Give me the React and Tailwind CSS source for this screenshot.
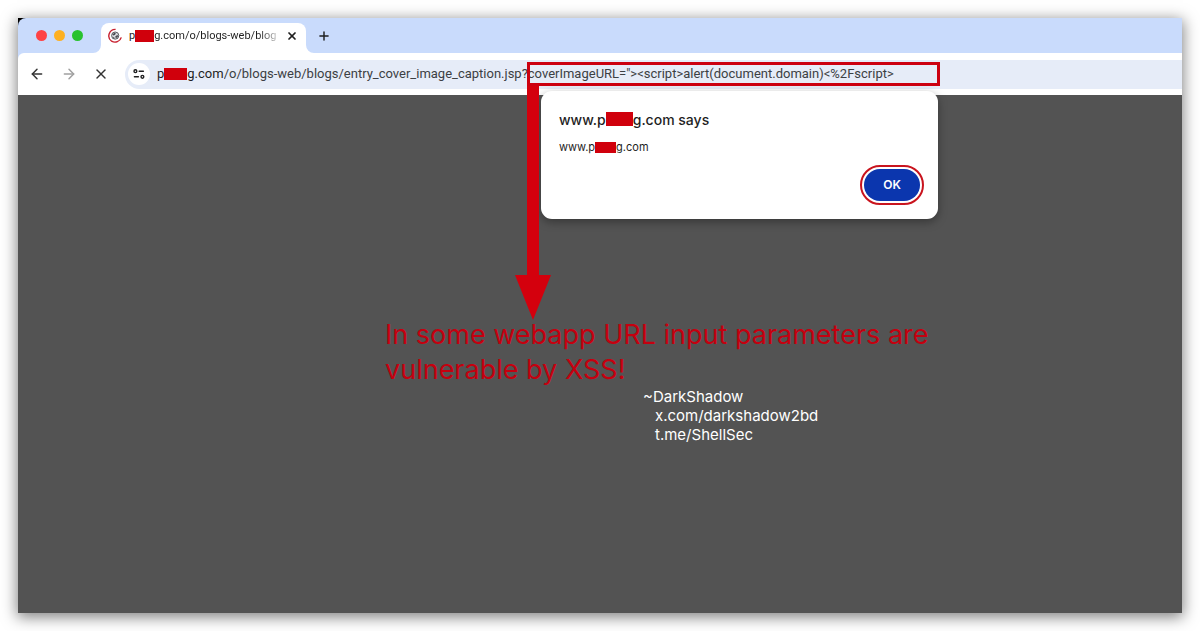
import React, { useState } from 'react';
import { ArrowLeft, ArrowRight, Plus, X } from 'lucide-react';
import clsx from 'clsx';

const TAB_PATH = 'g.com/o/blogs-web/blog';
const URL_PATH = '/o/blogs-web/blogs/entry_cover_image_caption.jsp?coverImageURL="><script>alert(document.domain)<%2Fscript>';

function Redacted({ className }) {
    return <span aria-hidden="true" className={clsx('inline-block shrink-0 bg-[#d0000c]', className)} />;
}

function Favicon() {
    return (
        <svg viewBox="0 0 16 16" className="w-4 h-4 shrink-0" fill="none" aria-hidden="true">
            <path d="M8.6 1.4A6.5 6.5 0 0 0 4.6 13.2 6.6 6.6 0 0 0 14.3 9.4" stroke="#c8202f" strokeWidth="1.4" />
            <circle cx="8.2" cy="7.6" r="3.6" fill="#d9dce0" stroke="#4a4d52" strokeWidth="0.9" />
            <path d="M5.4 6.4l2-1.6 1.6.6-1.2 1.6-1.6.6zM8.2 8.6l2-1.6 1 .8-.8 1.8-1.6.4zM5.8 9l1.4.2.4 1.2-1 .2z" fill="#4a4d52" />
        </svg>
    );
}

function SiteInfoIcon() {
    return (
        <svg viewBox="0 0 14 14" className="w-3.5 h-3.5" fill="none" stroke="#1f1f1f" strokeWidth="1.4" aria-hidden="true">
            <circle cx="3.4" cy="4.2" r="1.4" />
            <path d="M7.2 4.2h4.2M2.4 9.8h4" strokeLinecap="round" />
            <circle cx="10.4" cy="9.8" r="1.4" />
        </svg>
    );
}

function TabStrip() {
    return (
        <div className="flex items-end h-[35px] bg-[#c9dbfc] rounded-tl-[8px]">
            <div className="flex items-center gap-[7px] w-[83px] h-[35px] pl-[18px] shrink-0">
                <button type="button" aria-label="Close window" className="w-[11px] h-[11px] rounded-full bg-[#fe4245]" />
                <button type="button" aria-label="Minimize window" className="w-[11px] h-[11px] rounded-full bg-[#fdb022]" />
                <button type="button" aria-label="Zoom window" className="w-[11px] h-[11px] rounded-full bg-[#28c22e]" />
            </div>

            <div className="relative flex items-center w-[205px] h-[30px] pl-1.5 pr-2 pb-1 bg-white rounded-t-[8px] text-[11px] text-[#1f1f1f] shrink-0">
                <svg viewBox="0 0 8 8" className="absolute bottom-0 -left-2 w-2 h-2" fill="#fff" aria-hidden="true">
                    <path d="M8 0v8H0a8 8 0 0 0 8-8z" />
                </svg>
                <svg viewBox="0 0 8 8" className="absolute bottom-0 -right-2 w-2 h-2" fill="#fff" aria-hidden="true">
                    <path d="M0 0v8h8a8 8 0 0 1-8-8z" />
                </svg>
                <Favicon />
                <div className="flex items-center ml-1.5 whitespace-nowrap font-['Roboto',sans-serif]">
                    p<Redacted className="w-[19px] h-[12px]" />
                    <span className="bg-linear-to-r from-[#1f1f1f] from-85% to-[#c4c4c4] bg-clip-text text-transparent">{TAB_PATH}</span>
                </div>
                <button type="button" aria-label="Close tab" className="ml-auto">
                    <X className="w-3 h-3" strokeWidth={3.5} />
                </button>
            </div>

            <button type="button" aria-label="New tab" className="flex items-center justify-center w-9 h-[35px] text-[#1f1f1f]">
                <Plus className="w-3.5 h-3.5" strokeWidth={2.5} />
            </button>
        </div>
    );
}

function Toolbar() {
    const [path, setPath] = useState(URL_PATH);

    return (
        <div className="bg-[#c9dbfc]">
            <div className="flex items-center h-[42px] pl-[11px] bg-white rounded-tl-[6px]">
                <div className="flex items-center gap-4 text-[#333]">
                    <button type="button" aria-label="Back"><ArrowLeft className="w-4 h-4" strokeWidth={2.2} /></button>
                    <button type="button" aria-label="Forward" className="text-[#a0a0a0]"><ArrowRight className="w-4 h-4" strokeWidth={2.2} /></button>
                    <button type="button" aria-label="Stop loading"><X className="w-4 h-4" strokeWidth={2.2} /></button>
                </div>

                <div className="flex items-center flex-1 h-[29px] ml-4 pl-[3px] bg-[#e6ecf8] rounded-l-full text-[13px] text-[#1f1f1f] font-['Roboto',sans-serif]">
                    <button type="button" aria-label="View site information" className="flex items-center justify-center w-[22px] h-[22px] mr-[7px] rounded-full bg-white shrink-0">
                        <SiteInfoIcon />
                    </button>
                    <label htmlFor="address" className="flex items-center shrink-0">
                        p<Redacted className="w-[23px] h-[12px]" />g.com
                    </label>
                    <input
                        id="address"
                        type="text"
                        spellCheck={false}
                        value={path}
                        onChange={(e) => setPath(e.target.value)}
                        className="flex-1 min-w-0 bg-transparent text-[#3c4043] outline-none"
                    />
                </div>
            </div>
        </div>
    );
}

function AlertDialog() {
    return (
        <div role="alertdialog" aria-labelledby="alert-title" className="absolute -top-1 left-[523px] w-[397px] pt-[17px] pb-[18px] pl-[18px] pr-[18px] bg-white rounded-[11px] shadow-[0_3px_10px_rgba(0,0,0,0.35)] text-[#1f1f1f]">
            <h1 id="alert-title" className="flex items-center h-[22px] text-[14px] font-medium">
                www.p<Redacted className="w-[27px] h-[14px]" />g.com&nbsp;says
            </h1>
            <p className="flex items-center h-[18px] mt-2 text-[11px]">
                www.p<Redacted className="w-[21px] h-[11px]" />g.com
            </p>
            <div className="flex justify-end mt-[13px]">
                <button type="button" className="w-14 h-8 rounded-full bg-[#0b36ae] text-white text-[12px] font-semibold outline-2 outline-offset-2 outline-[#c9141e]">
                    OK
                </button>
            </div>
        </div>
    );
}

function UrlCallout() {
    return (
        <>
            <div className="absolute top-[44px] left-[509px] w-[413px] h-[24px] border-3 border-[#cc0010]" />
            <svg viewBox="0 0 38 234" className="absolute top-[68px] left-[496px] w-[38px] h-[234px]" fill="#d4000d" aria-hidden="true">
                <path d="M13 0h12v189h12L19 234 1 189h12z" />
            </svg>
        </>
    );
}

export default function App() {
    return (
        <div className="flex flex-col min-h-screen p-[18px] bg-white font-['Inter',sans-serif]">
            <div className="relative flex flex-col flex-1 bg-black shadow-[0_3px_14px_1px_rgba(0,0,0,0.5)]">
                <TabStrip />
                <Toolbar />
                <main className="relative flex-1 pt-[222px] pl-[367px] bg-[#535353]">
                    <p className="max-w-[570px] text-[27px] leading-[35px] text-[#c5000f]">
                        In some webapp URL input parameters are vulnerable by XSS!
                    </p>
                    <div className="ml-[258px] text-[15px] leading-[19px] text-white">
                        <p>~DarkShadow</p>
                        <p className="pl-3"><a href="https://x.com/darkshadow2bd">x.com/darkshadow2bd</a></p>
                        <p className="pl-3"><a href="https://t.me/ShellSec">t.me/ShellSec</a></p>
                    </div>
                    <AlertDialog />
                </main>
                <UrlCallout />
            </div>
        </div>
    );
}
